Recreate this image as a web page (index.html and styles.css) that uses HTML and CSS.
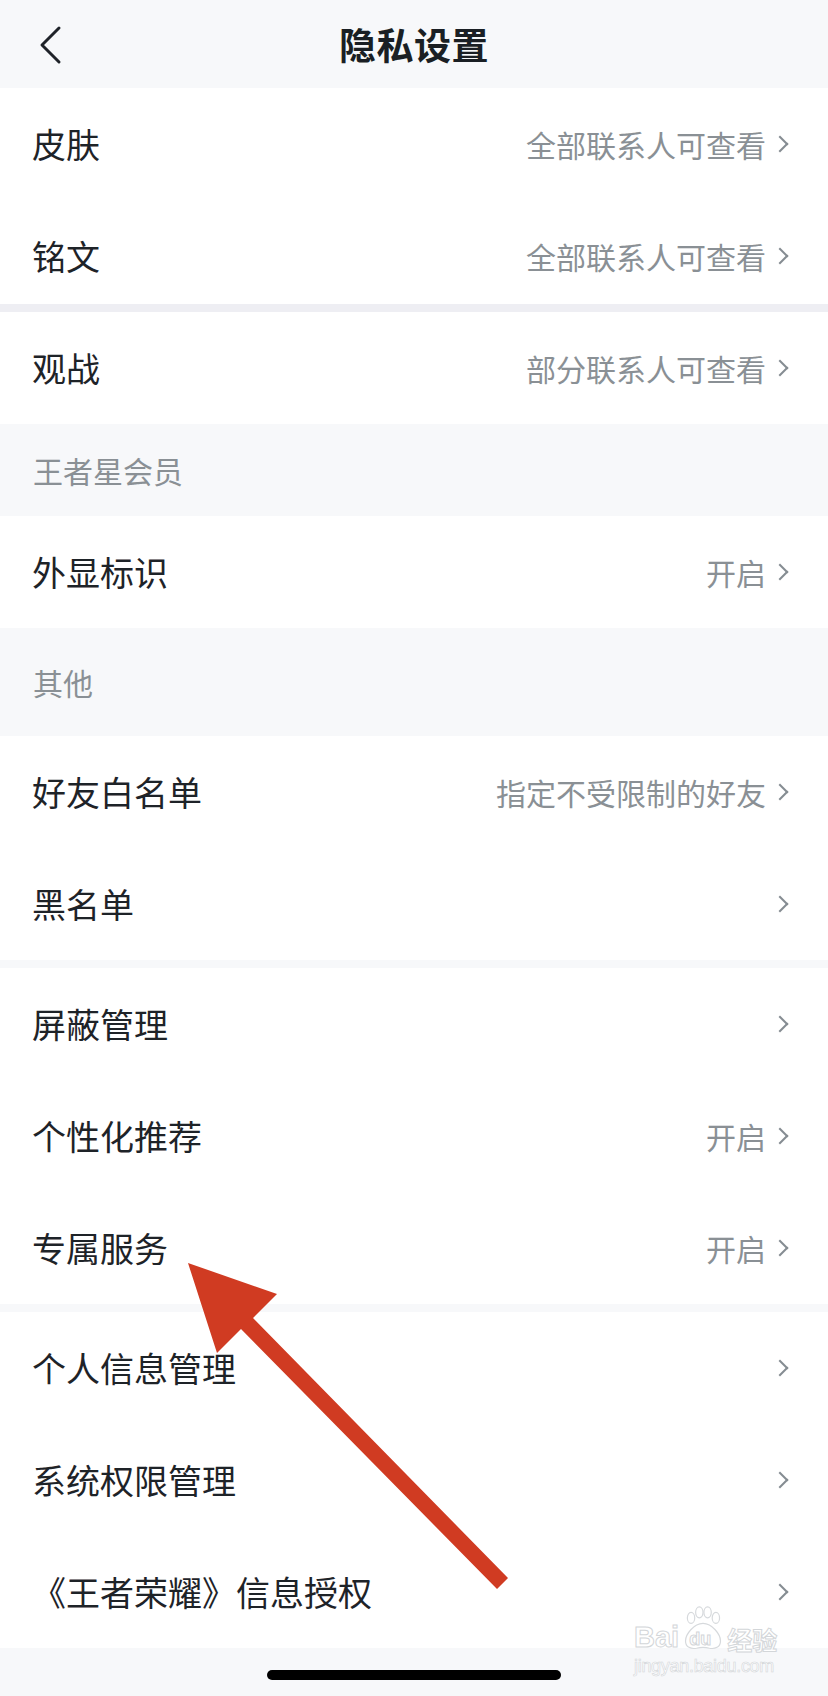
FILE: index.html
```html
<!DOCTYPE html>
<html>
<head>
    <meta charset="utf-8">
    <title>隐私设置</title>
    <link rel="stylesheet" href="styles.css">
</head>
<body>
    <div class="page">
        <div class="nav">
            <div class="back">
                <svg width="24" height="40" viewBox="0 0 24 40">
                    <polyline points="20,3 3,20 20,37" fill="none" stroke="#1f2329" stroke-width="3" stroke-linecap="round" stroke-linejoin="round"/>
                </svg>
            </div>
            <div class="title">隐私设置</div>
            <div></div>
        </div>

        <div class="group">
            <div class="row">
                <span class="label">皮肤</span>
                <span class="value">全部联系人可查看<i class="chev"></i></span>
            </div>
            <div class="row short">
                <span class="label">铭文</span>
                <span class="value">全部联系人可查看<i class="chev"></i></span>
            </div>
        </div>
        <div class="gap lavender"></div>
        <div class="group">
            <div class="row">
                <span class="label">观战</span>
                <span class="value">部分联系人可查看<i class="chev"></i></span>
            </div>
        </div>

        <div class="section-title">王者星会员</div>
        <div class="group">
            <div class="row">
                <span class="label">外显标识</span>
                <span class="value">开启<i class="chev"></i></span>
            </div>
        </div>

        <div class="section-title tall">其他</div>
        <div class="group">
            <div class="row">
                <span class="label">好友白名单</span>
                <span class="value">指定不受限制的好友<i class="chev"></i></span>
            </div>
            <div class="row">
                <span class="label">黑名单</span>
                <span class="value"><i class="chev"></i></span>
            </div>
        </div>
        <div class="gap"></div>
        <div class="group">
            <div class="row">
                <span class="label">屏蔽管理</span>
                <span class="value"><i class="chev"></i></span>
            </div>
            <div class="row">
                <span class="label">个性化推荐</span>
                <span class="value">开启<i class="chev"></i></span>
            </div>
            <div class="row">
                <span class="label">专属服务</span>
                <span class="value">开启<i class="chev"></i></span>
            </div>
        </div>
        <div class="gap"></div>
        <div class="group">
            <div class="row">
                <span class="label">个人信息管理</span>
                <span class="value"><i class="chev"></i></span>
            </div>
            <div class="row">
                <span class="label">系统权限管理</span>
                <span class="value"><i class="chev"></i></span>
            </div>
            <div class="row">
                <span class="label">《王者荣耀》信息授权</span>
                <span class="value"><i class="chev"></i></span>
            </div>
        </div>

        <div class="home-bar">
            <div class="indicator"></div>
        </div>

        <!-- red annotation arrow drawn over the list -->
        <svg class="arrow" width="828" height="1696" viewBox="0 0 828 1696">
            <polygon points="188,1263 277,1294 253,1318 508,1578 497,1589 241,1329 217,1353" fill="#d03b22"/>
        </svg>

        <div class="watermark">
            <div class="wm-logo">
                <span>Bai</span>
                <span class="paw">
                    <svg width="46" height="48" viewBox="0 0 50 50">
                        <g fill="#fff" stroke="#d6d9dc" stroke-width="1.3">
                            <ellipse cx="12" cy="14" rx="4" ry="6"/>
                            <ellipse cx="21" cy="8" rx="4" ry="6"/>
                            <ellipse cx="30" cy="8" rx="4" ry="6"/>
                            <ellipse cx="39" cy="14" rx="4" ry="6"/>
                            <path d="M25 20 C15 20 6 32 6 39 C6 46 12 48 18 47 C22 46 28 46 32 47 C38 48 44 46 44 39 C44 32 35 20 25 20 Z"/>
                        </g>
                    </svg>
                    <span class="du">du</span>
                </span>
                <span class="jy">经验</span>
            </div>
            <div class="wm-url">jingyan.baidu.com</div>
        </div>
    </div>
</body>
</html>
```

FILE: styles.css
```css
body {
    margin: 0;
    background-color: #f7f8fa;
    font-family: "Noto Sans CJK SC", "Noto Sans", sans-serif;
    color: #1e2328;
}

.page {
    position: relative;
    width: 828px;
    height: 1696px;
    overflow: hidden;
    background-color: #f7f8fa;
}

.nav {
    height: 88px;
    display: grid;
    grid-template-columns: 100px 1fr 100px;
    align-items: center;
    background-color: #f7f8fa;
}

.back {
    display: flex;
    align-items: center;
    padding-left: 39px;
    padding-top: 1px;
}

.title {
    text-align: center;
    font-size: 37px;
    font-weight: 700;
    color: #1a1f24;
    letter-spacing: 0.5px;
}

.group {
    background-color: #fff;
}

.row {
    height: 112px;
    display: flex;
    align-items: center;
    justify-content: space-between;
    padding: 0 39px 0 32px;
    box-sizing: border-box;
}

.row.short {
    height: 104px;
    padding-top: 8px;
}

.label {
    font-size: 34px;
    line-height: 1;
    color: #1e2328;
}

.value {
    display: flex;
    align-items: center;
    font-size: 30px;
    line-height: 1;
    color: #8a9095;
}

.chev {
    display: inline-block;
    width: 10px;
    height: 10px;
    margin-left: 8px;
    margin-right: 3px;
    border-top: 2.5px solid #858c92;
    border-right: 2.5px solid #858c92;
    transform: rotate(45deg);
}

.gap {
    height: 8px;
    background-color: #f7f8fa;
}

.gap.lavender {
    background-color: #eeeef3;
}

.section-title {
    height: 92px;
    display: flex;
    align-items: center;
    padding-left: 33px;
    font-size: 30px;
    color: #8a9095;
}

.section-title.tall {
    height: 108px;
}

.home-bar {
    height: 48px;
    display: flex;
    justify-content: center;
    padding-top: 22px;
    box-sizing: border-box;
}

.indicator {
    width: 294px;
    height: 10px;
    border-radius: 5px;
    background-color: #000;
}

.arrow {
    position: absolute;
    top: 0;
    left: 0;
    pointer-events: none;
}

.watermark {
    position: absolute;
    left: 634px;
    top: 1604px;
    white-space: nowrap;
    color: #fff;
    -webkit-text-stroke: 1px #d3d6d9;
    font-family: "Liberation Sans", "Noto Sans CJK SC", sans-serif;
}

.wm-logo {
    display: flex;
    align-items: flex-end;
    font-size: 29px;
    line-height: 1;
    font-weight: 700;
}

.paw {
    position: relative;
    width: 46px;
    height: 48px;
    margin: 0 1px;
}

.paw svg {
    display: block;
}

.du {
    position: absolute;
    left: 9px;
    bottom: 4px;
    font-size: 18px;
}

.jy {
    font-size: 25px;
    font-family: "Noto Sans CJK SC", sans-serif;
}

.wm-url {
    font-size: 18px;
    margin-top: 4px;
    -webkit-text-stroke: 0.6px #d3d6d9;
    letter-spacing: -0.3px;
}
```
